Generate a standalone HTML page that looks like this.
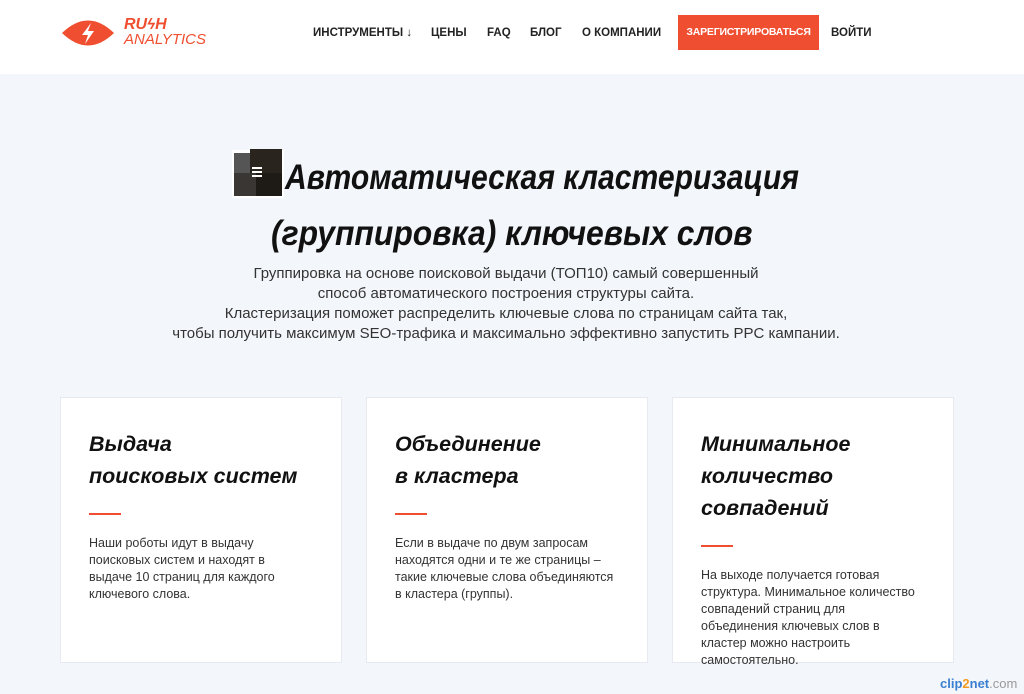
<!DOCTYPE html><html><head><meta charset="utf-8"><style>
body{margin:0;width:1024px;height:694px;overflow:hidden;background:#f3f6fa;font-family:"Liberation Sans",sans-serif;position:relative}
.hd{position:absolute;left:0;top:0;width:1024px;height:74px;background:#fff}
.nav{position:absolute;top:27px;font-size:11.5px;font-weight:bold;color:#222}
.btn{position:absolute;left:678px;top:15px;width:141px;height:35px;background:#f04e30;color:#fff;font-size:10.5px;font-weight:bold;text-align:center;line-height:35px;letter-spacing:-0.2px}
.h1{position:absolute;margin:0;font-size:35px;font-style:italic;font-weight:bold;line-height:40px;color:#111;white-space:nowrap;transform-origin:left top}
.sub{position:absolute;left:0;width:1012px;top:264px;text-align:center;font-size:15px;line-height:20px;color:#333}
.card{position:absolute;top:397px;width:280px;height:264px;background:#fff;border:1px solid #e6eaf0}
.card h3{margin:0;position:absolute;left:28px;top:30px;font-size:21.5px;font-style:italic;font-weight:bold;line-height:32px;color:#111}
.card .ln{position:absolute;left:28px;width:32px;height:2px;background:#f04e30}
.card p{margin:0;position:absolute;left:28px;width:200px;font-size:12.5px;line-height:17px;color:#333}
</style></head><body>
<div class="hd">
<svg style="position:absolute;left:60px;top:18px" width="56" height="30" viewBox="0 0 56 30"><path d="M2 15 Q28 -10 54 15 Q28 40 2 15Z" fill="#f04e30"/><path d="M31 5 L22 17 H28 L25 26 L34 13 H28 Z" fill="#fff"/></svg>
<div style="position:absolute;left:124px;top:17px;color:#f04e30;font-size:16px;font-weight:bold;font-style:italic;line-height:15px">RU<span style="font-size:15px">ϟ</span>H</div>
<div style="position:absolute;left:124px;top:32px;color:#f04e30;font-size:15px;font-style:italic;line-height:16px">ANALYTICS</div>
<div class="nav" style="left:313px">ИНСТРУМЕНТЫ ↓</div>
<div class="nav" style="left:431px">ЦЕНЫ</div>
<div class="nav" style="left:487px">FAQ</div>
<div class="nav" style="left:530px">БЛОГ</div>
<div class="nav" style="left:582px">О КОМПАНИИ</div>
<div class="btn">ЗАРЕГИСТРИРОВАТЬСЯ</div>
<div class="nav" style="left:831px">ВОЙТИ</div>
</div>
<div style="position:absolute;left:232px;top:150px;width:52px;height:48px;background:#fff"></div>
<div style="position:absolute;left:234px;top:153px;width:24px;height:22px;background:#555"></div>
<div style="position:absolute;left:250px;top:149px;width:32px;height:26px;background:#2a241e"></div>
<div style="position:absolute;left:234px;top:173px;width:24px;height:23px;background:#3a3633"></div>
<div style="position:absolute;left:256px;top:173px;width:26px;height:23px;background:#1e1a16"></div>
<div style="position:absolute;left:252px;top:167px;width:10px;height:2px;background:#fff;box-shadow:0 4px 0 #fff,0 8px 0 #fff"></div>
<div class="h1" style="left:285px;top:158px;transform:scaleX(0.86)">Автоматическая кластеризация</div>
<div class="h1" style="left:271px;top:214px;transform:scaleX(0.91)">(группировка) ключевых слов</div>
<div class="sub">Группировка на основе поисковой выдачи (ТОП10) самый совершенный<br>способ автоматического построения структуры сайта.<br>Кластеризация поможет распределить ключевые слова по страницам сайта так,<br>чтобы получить максимум SEO-трафика и максимально эффективно запустить PPC кампании.</div>
<div class="card" style="left:60px"><h3>Выдача<br>поисковых систем</h3><div class="ln" style="top:115px"></div><p style="top:137px">Наши роботы идут в выдачу поисковых систем и находят в выдаче 10 страниц для каждого ключевого слова.</p></div>
<div class="card" style="left:366px"><h3>Объединение<br>в кластера</h3><div class="ln" style="top:115px"></div><p style="top:137px;width:228px">Если в выдаче по двум запросам находятся одни и те же страницы – такие ключевые слова объединяются в кластера (группы).</p></div>
<div class="card" style="left:672px"><h3>Минимальное<br>количество<br>совпадений</h3><div class="ln" style="top:147px"></div><p style="top:169px;width:240px;white-space:nowrap">На выходе получается готовая<br>структура. Минимальное количество<br>совпадений страниц для<br>объединения ключевых слов в<br>кластер можно настроить<br>самостоятельно.</p></div>
<div style="position:absolute;left:928px;top:676px;width:96px;height:18px;background:#f3f6fa;font-size:13px;color:#3a7fd0;font-weight:bold;padding-left:12px">clip<span style="color:#f39a1e">2</span>net<span style="color:#999;font-weight:normal">.com</span></div>
</body></html>
